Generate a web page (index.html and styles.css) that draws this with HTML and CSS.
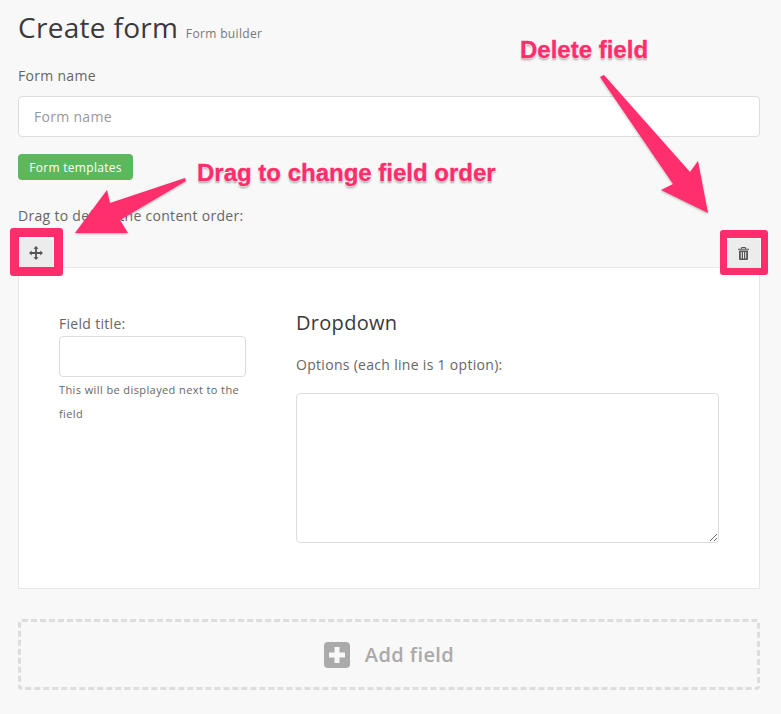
FILE: index.html
```html
<!DOCTYPE html>
<html lang="en">
<head>
  <meta charset="UTF-8" />
  <meta name="viewport" content="width=device-width, initial-scale=1.0" />
  <title>Create form</title>
  <link rel="stylesheet" href="styles.css">
</head>
<body>
  <div class="page">
    <h1 class="page-title">Create form <small>Form builder</small></h1>

    <label class="form-label">Form name</label>
    <input class="text-input name-input" type="text" placeholder="Form name">

    <button type="button" class="btn-templates">Form templates</button>

    <p class="form-label order-label">Drag to define the content order:</p>

    <div class="field-tools">
      <button type="button" class="tool-btn" aria-label="Move">
        <svg width="14" height="14" viewBox="0 0 14 14"><path fill="#555" d="M7 0l2.600 2.700H7.900v3.400h3.400V4.400L14 7l-2.700 2.600V7.900H7.900v3.400h1.700L7 14l-2.600-2.700h1.700V7.900H2.700v1.700L0 7l2.700-2.600v1.700h3.400V2.700H4.400z"/></svg>
      </button>
      <button type="button" class="tool-btn tool-btn-delete" aria-label="Delete">
        <svg width="11" height="13" viewBox="0 0 11 13"><path fill="#555" fill-rule="evenodd" d="M3.500 0h4l.8 1.700h2.700v1.100H0V1.700h2.700zM4 .9l-.2.8h3.400L7 .9zM1 3.500h9V12a1 1 0 0 1-1 1H2a1 1 0 0 1-1-1zM2.800 5v6.500h1V5zm2.200 0v6.500h1V5zm2.200 0v6.500h1V5z"/></svg>
      </button>
    </div>

    <div class="field-card">
      <div class="field-meta">
        <label class="field-label">Field title:</label>
        <input class="text-input title-input" type="text">
        <p class="help-text">This will be displayed next to the field</p>
      </div>
      <div class="field-options">
        <h3>Dropdown</h3>
        <label class="form-label options-label">Options (each line is 1 option):</label>
        <textarea class="text-input options-input"></textarea>
      </div>
    </div>

    <div class="add-field">
      <svg width="26" height="26" viewBox="0 0 26 26"><rect width="26" height="26" rx="4" fill="#aaa"/><path fill="#f8f8f8" d="M10.500 5h5v5.500H21v5h-5.500V21h-5v-5.500H5v-5h5.500z"/></svg>
      <span>Add field</span>
    </div>
  </div>

  <!-- annotations drawn over the screenshot -->
  <svg class="arrows" width="781" height="714" viewBox="0 0 781 714">
    <defs>
      <filter id="soft" x="-20%" y="-20%" width="140%" height="140%">
        <feDropShadow dx="0" dy="1" stdDeviation="1.200" flood-color="#000" flood-opacity="0.3"/>
      </filter>
    </defs>
    <g fill="#ff2d6c" filter="url(#soft)">
      <path d="M75 233L107 190L110 203L185 178L186 181L120 220L128 233z"/>
      <path d="M600 77L604 75L690 172L698 161L708 213L661 190L673 184z"/>
    </g>
  </svg>
  <div class="mark mark-move"></div>
  <div class="mark mark-delete"></div>
  <div class="note note-drag">Drag to change field order</div>
  <div class="note note-delete">Delete field</div>
</body>
</html>
```

FILE: styles.css
```css
* {
  margin: 0;
  padding: 0;
  box-sizing: border-box;
}
body {
  position: relative;
  width: 781px;
  height: 714px;
  overflow: hidden;
  background: #f8f8f8;
  color: #666;
  font-family: 'Open Sans', sans-serif;
}
.page {
  padding: 8px 21px 0 18px;
}
.page-title {
  font-size: 28px;
  line-height: 38px;
  font-weight: 400;
  letter-spacing: 0.3px;
  color: #3a3a3a;
}
.page-title small {
  font-size: 12px;
  letter-spacing: 0.35px;
  color: #777;
}
.form-label {
  display: block;
  font-size: 14px;
  line-height: 20px;
  letter-spacing: 0.3px;
  color: #666;
}
.page-title + .form-label {
  margin-top: 13px;
}
.text-input {
  display: block;
  width: 100%;
  background: #fff;
  border: 1px solid #ddd;
  border-radius: 4px;
  font-family: inherit;
  outline: none;
}
.name-input {
  height: 41px;
  margin-top: 10px;
  padding: 0 15px;
  font-size: 14px;
  letter-spacing: 0.3px;
}
.name-input::placeholder {
  color: #999;
  opacity: 1;
}
.btn-templates {
  display: block;
  margin-top: 17px;
  width: 115px;
  height: 26px;
  background: #5cb85c;
  color: #fff;
  border: none;
  border-radius: 4px;
  font-family: inherit;
  font-size: 12px;
  letter-spacing: 0.3px;
}
.order-label {
  margin-top: 26px;
}
.field-tools {
  display: flex;
  justify-content: space-between;
  margin-top: 13px;
}
.tool-btn {
  display: flex;
  align-items: center;
  justify-content: center;
  width: 35px;
  height: 28px;
  background: #ececec;
  border: none;
  border-radius: 4px 4px 0 0;
}
.tool-btn-delete {
  width: 33px;
}
.field-card {
  display: flex;
  gap: 50px;
  height: 322px;
  padding: 47px 40px 0;
  background: #fff;
  border: 1px solid #e6e6e6;
}
.field-meta {
  flex: 0 0 187px;
}
.field-label {
  display: block;
  font-size: 14px;
  line-height: 18px;
  letter-spacing: 0.3px;
  color: #666;
}
.title-input {
  height: 41px;
  margin-top: 3px;
}
.help-text {
  margin-top: 1px;
  font-size: 11px;
  line-height: 24px;
  letter-spacing: 0.4px;
  color: #666;
}
.field-options {
  flex: 1;
}
.field-options h3 {
  font-size: 20px;
  line-height: 26px;
  font-weight: 400;
  letter-spacing: 0.3px;
  color: #3a3a3a;
  margin-top: -5px;
}
.options-label {
  margin-top: 19px;
}
.options-input {
  height: 150px;
  margin-top: 18px;
  resize: vertical;
}
.add-field {
  display: flex;
  align-items: center;
  justify-content: center;
  gap: 15px;
  height: 71px;
  margin-top: 30px;
  border: 3px dashed #ddd;
  border-radius: 4px;
  color: #aaa;
  font-size: 20px;
  font-weight: 600;
  letter-spacing: 0.4px;
}
.arrows {
  position: absolute;
  top: 0;
  left: 0;
}
.mark {
  position: absolute;
  border-style: solid;
  border-color: #ff2d6c;
  border-radius: 3px;
}
.mark-move {
  top: 228px;
  left: 10px;
  width: 53px;
  height: 48px;
  border-width: 9px;
}
.mark-delete {
  top: 230px;
  left: 720px;
  width: 48px;
  height: 45px;
  border-width: 8px 7px 7px;
}
.note {
  position: absolute;
  font-family: 'Liberation Sans', sans-serif;
  font-size: 24px;
  line-height: 28px;
  font-weight: 700;
  color: #ff2d6c;
  white-space: nowrap;
  -webkit-text-stroke: 0.4px #ff2d6c;
  text-shadow: 0 0 1px #fff, 0 0 2px #fff, 0 0 2px #fff, 0 0 3px #fff, 0 2px 2px rgba(0,0,0,0.4);
}
.note-drag {
  top: 159px;
  left: 197px;
}
.note-delete {
  top: 36px;
  left: 520px;
}
```
